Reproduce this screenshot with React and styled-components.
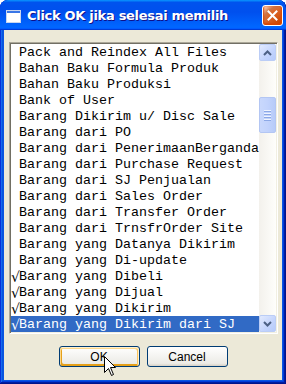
import React from 'react';
import styled, { createGlobalStyle } from 'styled-components';

const items = [
  { label: 'Pack and Reindex All Files' },
  { label: 'Bahan Baku Formula Produk' },
  { label: 'Bahan Baku Produksi' },
  { label: 'Bank of User' },
  { label: 'Barang Dikirim u/ Disc Sale' },
  { label: 'Barang dari PO' },
  { label: 'Barang dari PenerimaanBerganda' },
  { label: 'Barang dari Purchase Request' },
  { label: 'Barang dari SJ Penjualan' },
  { label: 'Barang dari Sales Order' },
  { label: 'Barang dari Transfer Order' },
  { label: 'Barang dari TrnsfrOrder Site' },
  { label: 'Barang yang Datanya Dikirim' },
  { label: 'Barang yang Di-update' },
  { label: 'Barang yang Dibeli', checked: true },
  { label: 'Barang yang Dijual', checked: true },
  { label: 'Barang yang Dikirim', checked: true },
  { label: 'Barang yang Dikirim dari SJ', checked: true, selected: true },
];

const App = () => {
  return (
    <>
      <GlobalStyle />
      <Window>
        <TitleBar>
          <TitleIcon width="15" height="13" viewBox="0 0 15 13">
            <rect x="0.5" y="0.5" width="14" height="12" fill="#fff" stroke="#c9d6ee" />
            <rect x="1" y="1" width="13" height="2" fill="#3a76e6" />
          </TitleIcon>
          <TitleText>Click OK jika selesai memilih</TitleText>
          <CloseButton>
            <svg width="11" height="11" viewBox="0 0 11 11">
              <path d="M1.5 1.5 L9.5 9.5 M9.5 1.5 L1.5 9.5" stroke="#fff" strokeWidth="2" strokeLinecap="square" />
            </svg>
          </CloseButton>
        </TitleBar>

        <Client>
          <ListBox>
            <Rows>
              {items.map((it) => (
                <Row key={it.label} selected={it.selected}>
                  <Mark>{it.checked ? '√' : ''}</Mark>
                  {it.label}
                </Row>
              ))}
            </Rows>
            <ScrollBar>
              <ArrowButton>
                <svg width="9" height="6" viewBox="0 0 9 6">
                  <path d="M1 5 L4.5 1.5 L8 5" fill="none" stroke="#4d6185" strokeWidth="2" />
                </svg>
              </ArrowButton>
              <Track>
                <Thumb>
                  <Grip />
                  <Grip />
                  <Grip />
                  <Grip />
                </Thumb>
              </Track>
              <ArrowButton>
                <svg width="9" height="6" viewBox="0 0 9 6">
                  <path d="M1 1 L4.5 4.5 L8 1" fill="none" stroke="#4d6185" strokeWidth="2" />
                </svg>
              </ArrowButton>
            </ScrollBar>
          </ListBox>

          <Buttons>
            <Button hover>OK</Button>
            <Button>Cancel</Button>
          </Buttons>
        </Client>

        <Cursor width="13" height="21" viewBox="0 0 13 21">
          <path
            d="M0.5 0.5 L0.5 16.5 L4.5 12.5 L7.5 19.5 L9.5 18.5 L6.5 11.5 L11.5 11.5 Z"
            fill="#fff"
            stroke="#000"
            strokeWidth="1"
          />
        </Cursor>
      </Window>
    </>
  );
};

export default App;

const GlobalStyle = createGlobalStyle`
  body {
    margin: 0;
    background: #fff;
  }
`;

// WINDOW FRAME
const Window = styled.div`
  position: relative;
  width: 286px;
  height: 384px;
  display: flex;
  flex-direction: column;
  background: #0a56e2;
  border-radius: 8px 8px 0 0;
  box-shadow: inset -1px -1px #00138c, inset 1px 1px #0831d9, inset -2px -2px #001ea0,
    inset 2px 2px #166aee, inset -3px -3px #003bda, inset 3px 3px #0855dd;
  overflow: hidden;
`;

const TitleBar = styled.div`
  height: 30px;
  flex: none;
  display: flex;
  align-items: center;
  padding: 0 3px 0 6px;
  border-radius: 8px 8px 0 0;
  background: linear-gradient(
    180deg,
    #0997ff,
    #0053ee 8%,
    #0050ee 40%,
    #06f 88%,
    #06f 93%,
    #005bff 95%,
    #003dd7 96%,
    #003dd7
  );
`;

const TitleIcon = styled.svg`
  flex: none;
  margin: 2px 6px 0 0;
`;

const TitleText = styled.span`
  flex: 1;
  color: #fff;
  font-family: 'DejaVu Sans', sans-serif;
  font-weight: bold;
  font-size: 13px;
  letter-spacing: -0.3px;
  text-shadow: 1px 1px #0f1089;
  padding-top: 1px;
`;

const CloseButton = styled.div`
  width: 21px;
  height: 21px;
  box-sizing: border-box;
  display: flex;
  align-items: center;
  justify-content: center;
  border: 1px solid #fff;
  border-radius: 3px;
  background: radial-gradient(circle at 90% 90%, #cc4600 0%, #dc6527 55%, #cd7546 70%, #ffccb2 90%, #fff 100%);
  box-shadow: inset 0 -1px 2px 1px #da4600;
  margin-top: 1px;
`;

// CLIENT AREA
const Client = styled.div`
  flex: 1;
  margin: 0 4px 4px;
  background: #ece9d8;
  padding: 12px 4px 0 5px;
  display: flex;
  flex-direction: column;
`;

const ListBox = styled.div`
  height: 292px;
  box-sizing: border-box;
  display: flex;
  background: #fff;
  border: 1px solid;
  border-color: #aca899 #fff #fff #aca899;
  box-shadow: inset 1px 1px #716f64, inset -1px -1px #f1efe2;
  padding: 1px;
`;

const Rows = styled.div`
  flex: 1;
`;

const Row = styled.div`
  height: 16px;
  box-sizing: border-box;
  padding-top: 2px;
  line-height: 14px;
  white-space: nowrap;
  font-family: 'Liberation Mono', 'Courier New', monospace;
  font-size: 13.33px;
  color: ${(p) => (p.selected ? '#fff' : '#000')};
  background: ${(p) => (p.selected ? '#316ac5' : 'transparent')};
`;

const Mark = styled.span`
  display: inline-block;
  width: 8px;
  font-family: 'DejaVu Sans', sans-serif;
  font-size: 14px;
  line-height: 14px;
  vertical-align: top;
`;

// SCROLLBAR
const ScrollBar = styled.div`
  width: 17px;
  flex: none;
  display: flex;
  flex-direction: column;
  background: linear-gradient(90deg, #f3f1ec, #fefefb);
`;

const ArrowButton = styled.div`
  height: 17px;
  flex: none;
  box-sizing: border-box;
  display: flex;
  align-items: center;
  justify-content: center;
  border: 1px solid #bbcdf6;
  border-radius: 2px;
  background: linear-gradient(135deg, #e2eafe, #c3d4fd 60%, #b6cbfb);
`;

const Track = styled.div`
  flex: 1;
  padding-top: 36px;
`;

const Thumb = styled.div`
  height: 36px;
  box-sizing: border-box;
  display: flex;
  flex-direction: column;
  align-items: center;
  justify-content: center;
  gap: 1px;
  border: 1px solid #b3c6f3;
  border-radius: 2px;
  background: linear-gradient(90deg, #c9d8fc, #c2d3fc 50%, #b7cbf9);
`;

const Grip = styled.div`
  width: 7px;
  height: 1px;
  background: #eef3fe;
  box-shadow: 0 1px #8ca8e6;
  margin-bottom: 1px;
`;

// BUTTONS
const Buttons = styled.div`
  display: flex;
  justify-content: center;
  gap: 7px;
  margin-top: 12px;
  padding-right: 1px;
`;

const Button = styled.div`
  width: 81px;
  height: 21px;
  box-sizing: border-box;
  display: flex;
  align-items: center;
  justify-content: center;
  border: 1px solid #003c74;
  border-radius: 3px;
  font-family: 'Liberation Sans', Arial, sans-serif;
  font-size: 12px;
  color: #000;
  background: linear-gradient(180deg, #fff, #ecebe6 86%, #d6d0c5);
  box-shadow: ${(p) =>
    p.hover
      ? 'inset -1px 1px #fff0cf, inset 1px 2px #fdd889, inset -2px 2px #fbc761, inset 2px -2px #e5a01a'
      : 'none'};
`;

const Cursor = styled.svg`
  position: absolute;
  left: 104px;
  top: 356px;
`;
